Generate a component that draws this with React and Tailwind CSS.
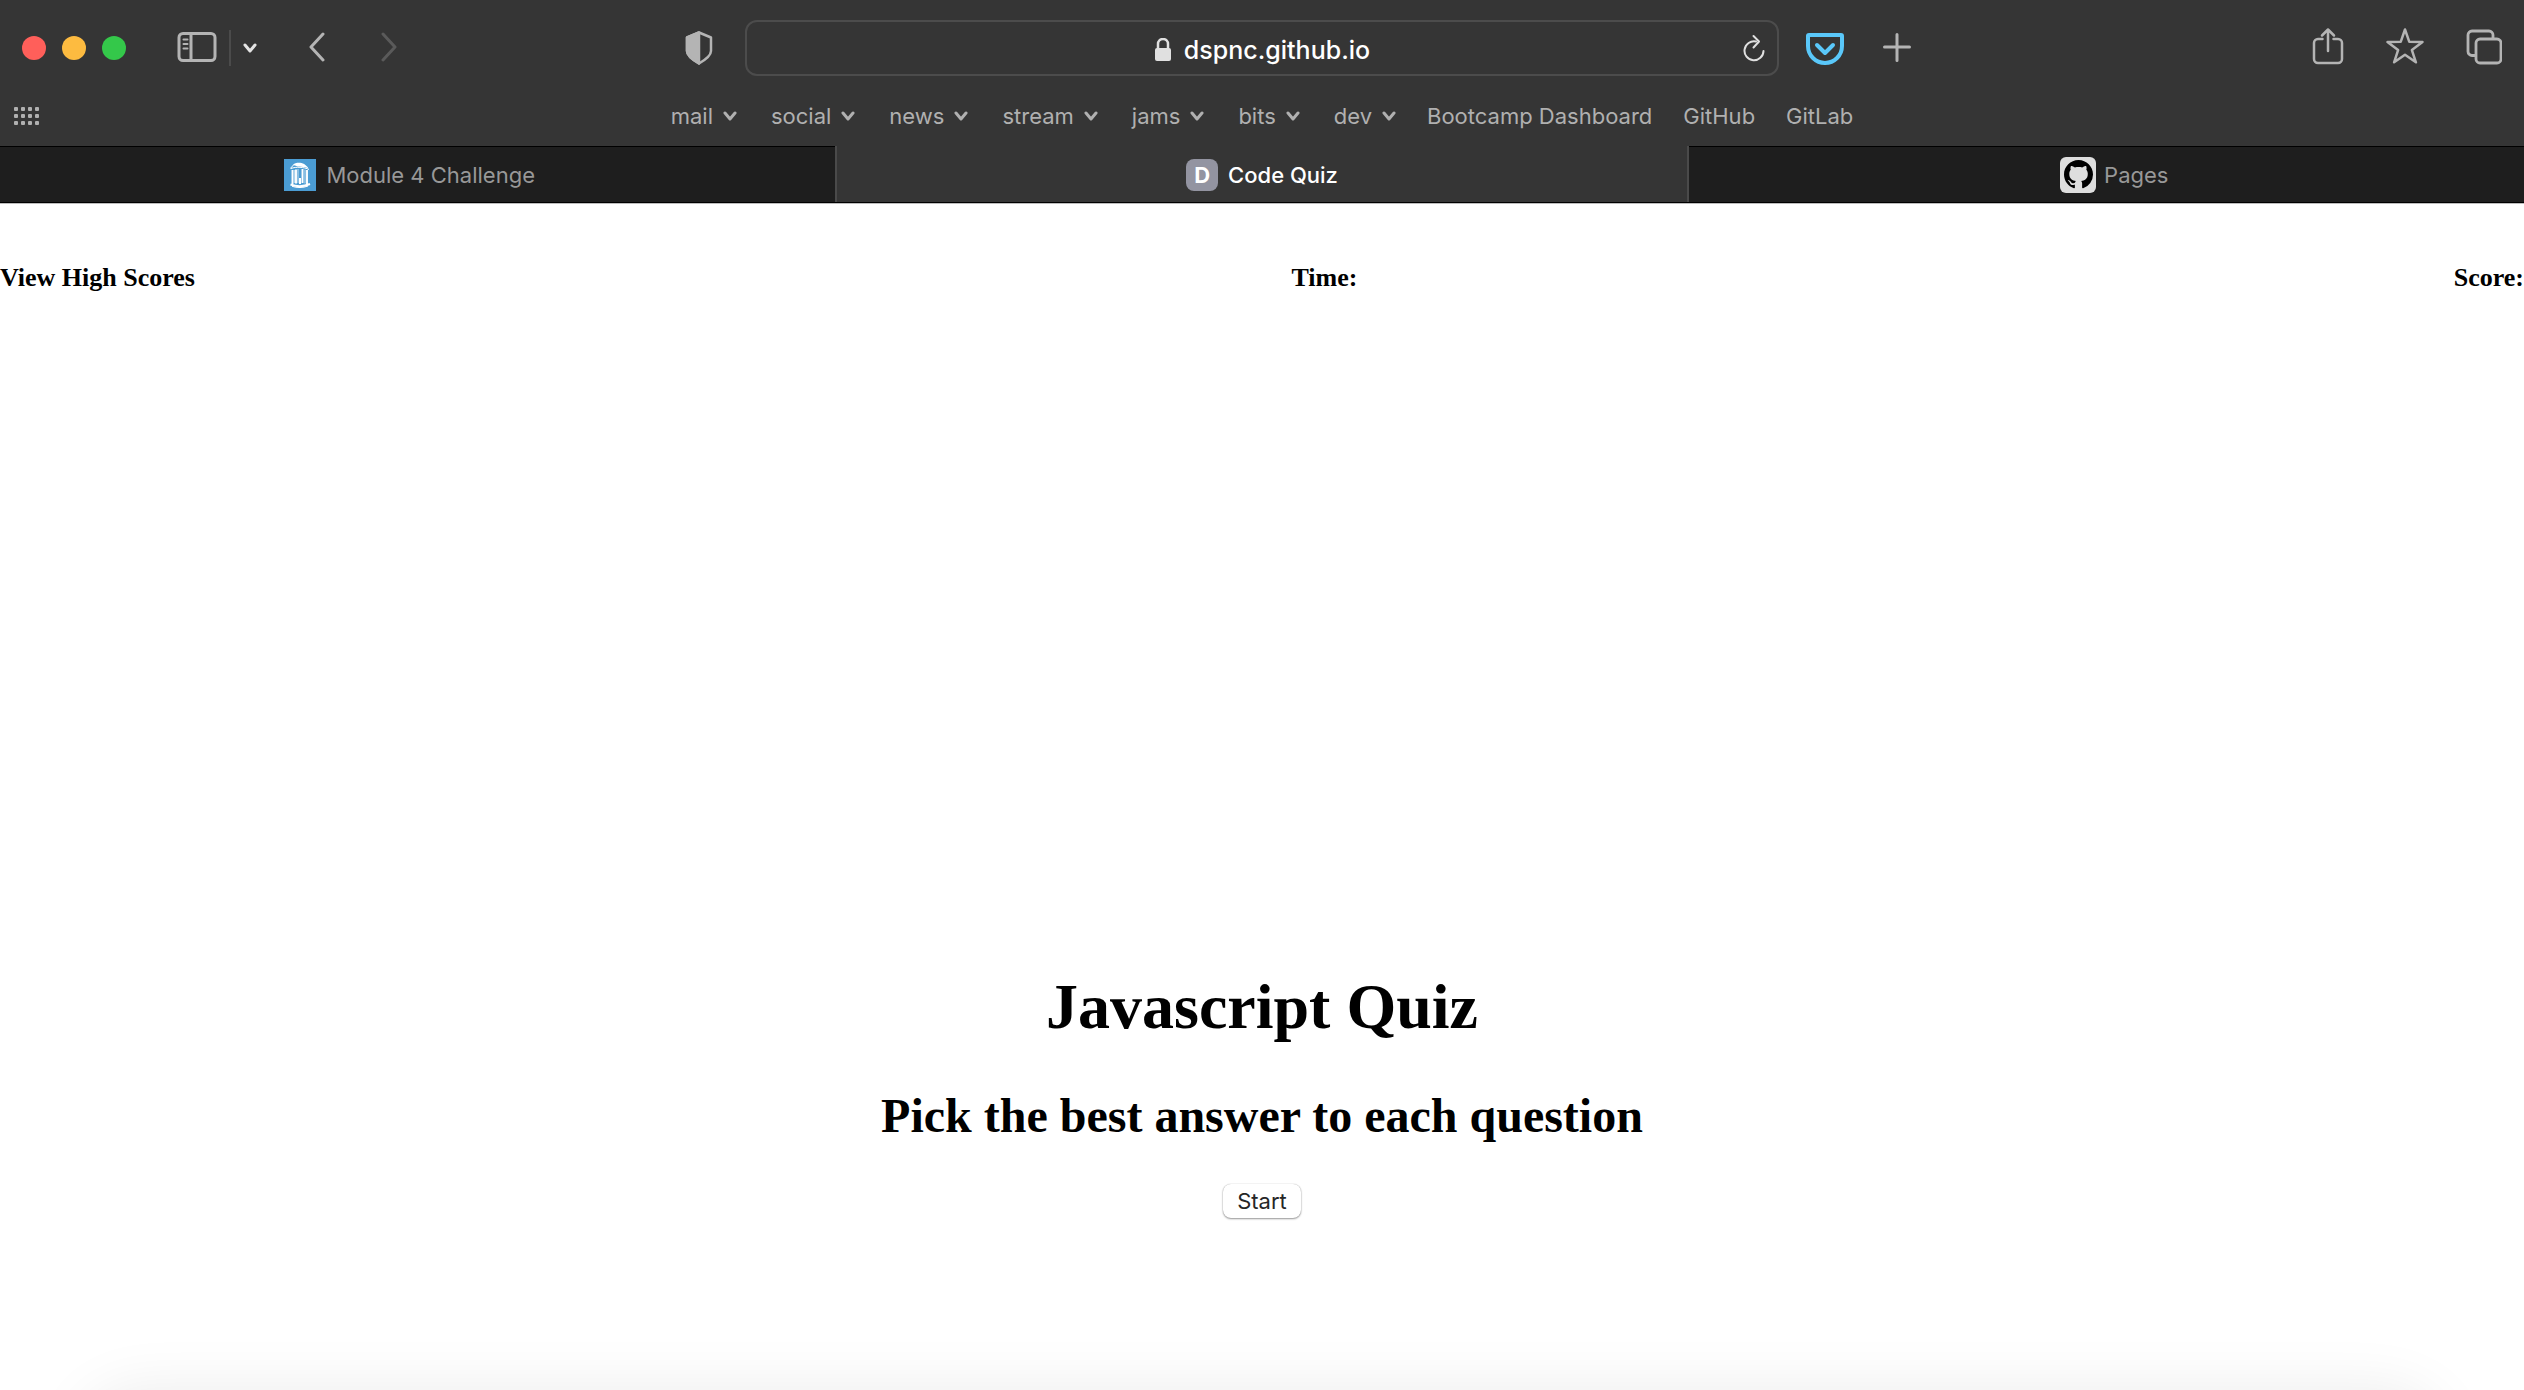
import React from "react";

const menus = ["mail", "social", "news", "stream", "jams", "bits", "dev"];
const links = ["Bootcamp Dashboard", "GitHub", "GitLab"];

function Icon({ w, h, children, className = "", sw = 3 }) {
  return (
    <svg
      width={w}
      height={h}
      viewBox={`0 0 ${w} ${h}`}
      fill="none"
      stroke="currentColor"
      strokeWidth={sw}
      strokeLinecap="round"
      strokeLinejoin="round"
      aria-hidden="true"
      className={`shrink-0 ${className}`}
    >
      {children}
    </svg>
  );
}

function Chevron() {
  return (
    <Icon w={14} h={10}>
      <path d="M2 2l5 6 5-6" />
    </Icon>
  );
}

function WellFavicon() {
  return (
    <svg width="32" height="32" viewBox="0 0 32 32" aria-hidden="true" className="shrink-0">
      <rect width="32" height="32" fill="#4b9cd3" />
      <path d="M9 5.5C13 2.5 21 3 24.500 9.500C20 7 14 8.500 11 6.500Z" fill="#fff" />
      <path d="M6.500 9.500C8 6.500 11 5 14 4.800M7 9.500C12 7.500 20 8 25 10.500" fill="none" stroke="#fff" strokeWidth="1" />
      <path d="M8.500 11v14M12 10.500v14M18.500 10v14M23 11v14" stroke="#fff" strokeWidth="1.900" />
      <path d="M10.300 11v13M14 10v14M21 10.500v14" stroke="#fff" strokeWidth="0.700" />
      <path d="M15 19h2v6h-2z" fill="#fff" />
      <path d="M6.500 25.500C12 27.500 20 27.500 26 25" fill="none" stroke="#fff" strokeWidth="2" />
      <path d="M8 27.300C13 29 19 29 24 27" fill="none" stroke="#fff" strokeWidth="1" />
    </svg>
  );
}

function GithubFavicon() {
  return (
    <span className="grid size-9 shrink-0 place-items-center rounded-md bg-[#dedede]">
      <svg width="29" height="29" viewBox="0 0 16 16" fill="#000" aria-hidden="true">
        <path d="M8 0C3.58 0 0 3.58 0 8c0 3.54 2.29 6.53 5.47 7.590.4.07.55-.17.55-.38 0-.19-.01-.82-.01-1.490-2.010.37-2.530-.49-2.690-.94-.09-.23-.48-.94-.82-1.130-.28-.15-.68-.52-.01-.53.63-.01 1.080.58 1.230.82.72 1.210 1.870.87 2.330.66.07-.52.28-.87.51-1.070-1.780-.2-3.640-.89-3.640-3.950 0-.87.31-1.590.82-2.150-.08-.2-.36-1.020.08-2.120 0 0 .67-.21 2.200.82.64-.18 1.320-.27 2-.27s1.360.09 2 .27c1.530-1.040 2.200-.82 2.200-.82.44 1.100.16 1.920.08 2.120.51.56.82 1.270.82 2.150 0 3.070-1.870 3.750-3.650 3.950.29.25.54.73.54 1.480 0 1.070-.01 1.930-.01 2.200 0 .21.15.46.55.38A8.010 8.010 0 0 0 16 8c0-4.420-3.580-8-8-8" />
      </svg>
    </span>
  );
}

function Toolbar() {
  return (
    <div className="grid grid-cols-[1fr_minmax(0,1034px)_1fr] items-center px-[22px] pt-5 text-[#b4b4b4]">
      <div className="flex h-14 items-center justify-between pr-8">
        <div className="flex items-center">
          <div className="flex gap-4">
            <button aria-label="Close window" className="size-6 rounded-full bg-[#ff5f5a]" />
            <button aria-label="Minimize window" className="size-6 rounded-full bg-[#fdbb40]" />
            <button aria-label="Zoom window" className="size-6 rounded-full bg-[#34c84a]" />
          </div>
          <button aria-label="Sidebar" className="ml-[51px]">
            <Icon w={40} h={32}>
              <rect x="2" y="1.500" width="36" height="27" rx="4" />
              <path d="M14 1.500v27" />
              <path d="M6.500 7.500h4M6.500 12h4M6.500 16.500h4" strokeWidth="2" />
            </Icon>
          </button>
          <span className="ml-3 h-9 w-0.5 bg-[#4b4b4b]" />
          <button aria-label="Sidebar options" className="ml-3 text-[#e4e4e4]">
            <Chevron />
          </button>
          <button aria-label="Back" className="ml-[51px]">
            <Icon w={18} h={32}>
              <path d="M15 2L3 15l12 13" />
            </Icon>
          </button>
          <button aria-label="Forward" className="ml-[54px] text-[#5a5a5a]">
            <Icon w={18} h={32}>
              <path d="M3 2l12 13L3 28" />
            </Icon>
          </button>
        </div>
        <button aria-label="Privacy report">
          <Icon w={28} h={34} sw={2.5}>
            <path d="M14 1.500L26 6.500V20c0 5-6 9-12 12.500C8 29 2 25 2 20V6.500z" />
            <path d="M14 1.500V32.500C8 29 2 25 2 20V6.500z" fill="currentColor" />
          </Icon>
        </button>
      </div>

      <div className="grid h-14 grid-cols-[1fr_auto_1fr] items-center rounded-xl border-2 border-[#4c4c4c] px-3">
        <span />
        <button className="flex items-center gap-3 pt-1 text-[25px] leading-8 font-medium text-white">
          <Icon w={18} h={24} sw={2.500} className="text-[#e0e0e0]">
            <rect x="1" y="10" width="16" height="13" rx="2" fill="currentColor" stroke="none" />
            <path d="M4 11V6a5 5 0 0 1 10 0v5" />
          </Icon>
          dspnc.github.io
        </button>
        <button aria-label="Reload" className="justify-self-end text-[#e0e0e0]">
          <Icon w={22} h={28} sw={2}>
            <path d="M13 7.500A9.500 9.500 0 1 0 20.500 17" />
            <path d="M10.500 2l5.500 5.500-5.500 6" />
          </Icon>
        </button>
      </div>

      <div className="flex h-14 items-center justify-between pl-[26px]">
        <div className="flex items-center gap-[38px]">
          <button aria-label="Pocket" className="text-[#5ac8fa]">
            <Icon w={40} h={34} sw={4}>
              <path d="M4 4h32a1 1 0 0 1 1 1v10a17 17 0 0 1-34 0V5a1 1 0 0 1 1-1z" />
              <path d="M12 14l8 8 8-8" />
            </Icon>
          </button>
          <button aria-label="New tab">
            <Icon w={28} h={30}>
              <path d="M14 1.500v26M1.500 14h25" />
            </Icon>
          </button>
        </div>
        <div className="flex items-center gap-[42px]">
          <button aria-label="Share">
            <Icon w={32} h={42} sw={2.500}>
              <path d="M10.500 12H6a4 4 0 0 0-4 4v16a4 4 0 0 0 4 4h20a4 4 0 0 0 4-4V16a4 4 0 0 0-4-4h-4.500" />
              <path d="M16 24V2.500M10 8.500l6-6 6 6" />
            </Icon>
          </button>
          <button aria-label="Bookmark">
            <Icon w={38} h={42} sw={2.500}>
              <path d="M19 2.500l4.300 12.300 13.200.2-10.600 8.100 4 12.200L19 27.800l-10.900 7.500 4-12.200L1.500 15l13.200-.2z" />
            </Icon>
          </button>
          <button aria-label="Tab overview">
            <Icon w={36} h={40} sw={2.800}>
              <path d="M9 27.500H6a4 4 0 0 1-4-4V7a4 4 0 0 1 4-4h17a4 4 0 0 1 4 4v3" />
              <rect x="10" y="11" width="25" height="24" rx="4" />
            </Icon>
          </button>
        </div>
      </div>
    </div>
  );
}

function Favorites() {
  return (
    <nav className="grid h-[70px] grid-cols-[1fr_auto_1fr] items-center px-3.5 pt-2.5 text-[22px] leading-7 text-[#b0b0b0]">
      <button aria-label="Favorites" className="justify-self-start">
        <svg width="25" height="18" viewBox="0 0 25 18" fill="currentColor" aria-hidden="true">
          {[0, 7, 14].map((y) =>
            [0, 7, 14, 21].map((x) => <rect key={`${x}-${y}`} x={x} y={y} width="4" height="4" rx="1" />)
          )}
        </svg>
      </button>
      <div className="flex items-center gap-[31px]">
        <div className="flex items-center gap-[34px]">
          {menus.map((m) => (
            <button key={m} className="flex items-center gap-2.5">
              {m}
              <Chevron />
            </button>
          ))}
        </div>
        {links.map((l) => (
          <a key={l} href="#">
            {l}
          </a>
        ))}
      </div>
      <span />
    </nav>
  );
}

function Tabs() {
  return (
    <div className="flex h-[57px] border-b border-black text-[22px] leading-7 text-[#989898]">
      <button className="flex flex-1 items-center justify-center gap-2.5 border-t border-black bg-[#1e1e1e] pr-4">
        <WellFavicon />
        Module 4 Challenge
      </button>
      <button className="flex w-[33.8%] items-center justify-center gap-2.5 border-x-2 border-[#4a4a4a] pt-px font-medium text-white">
        <span className="grid size-8 place-items-center rounded-lg bg-[#9394a1] font-bold">D</span>
        Code Quiz
      </button>
      <button className="flex flex-1 items-center justify-center gap-2 border-t border-black bg-[#1e1e1e] pl-4">
        <GithubFavicon />
        Pages
      </button>
    </div>
  );
}

export default function App() {
  return (
    <div className="relative flex min-h-screen flex-col overflow-hidden bg-white">
      <header className="bg-[#353535] font-['Inter',sans-serif]">
        <Toolbar />
        <Favorites />
        <Tabs />
      </header>
      <div className="flex flex-1 flex-col border-t border-[#bdbdbd] font-['Liberation_Serif',serif] font-bold text-black">
        <div className="flex justify-between pt-[58px] text-[26px] leading-8">
          <a href="#">View High Scores</a>
          <p>Time:</p>
          <p>Score:</p>
        </div>
        <main className="flex flex-1 flex-col items-center justify-end pb-[172px] text-center">
          <h1 className="text-[64px] leading-[74px]">Javascript Quiz</h1>
          <h2 className="mt-11 text-5xl leading-[56px]">Pick the best answer to each question</h2>
          <button className="mt-10 rounded-lg bg-white px-3.5 font-['Inter',sans-serif] text-[22px] leading-[34px] font-normal text-[#262626] shadow-[0_1px_2px_rgba(0,0,0,0.4),0_0_1px_rgba(0,0,0,0.3)]">
            Start
          </button>
        </main>
      </div>
      <div className="pointer-events-none absolute inset-x-20 top-full h-40 rounded-[60px] shadow-[0_0_60px_rgba(0,0,0,0.08)]" />
    </div>
  );
}
